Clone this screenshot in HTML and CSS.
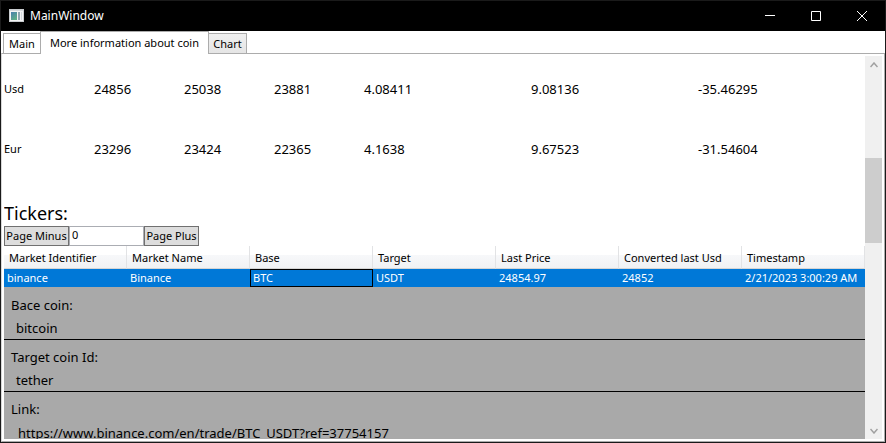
FILE: index.html
```html
<!DOCTYPE html>
<html lang="en">
<head>
<meta charset="utf-8">
<title>MainWindow</title>
<link rel="stylesheet" href="styles.css">
</head>
<body>
<div class="window">
  <header class="titlebar">
    <svg class="app-icon" width="16" height="14" viewBox="0 0 16 14" aria-hidden="true">
      <defs>
        <linearGradient id="pane" x1="0" y1="0" x2="0.6" y2="1">
          <stop offset="0" stop-color="#4a7fae"/><stop offset="1" stop-color="#5fae86"/>
        </linearGradient>
      </defs>
      <rect x="0.5" y="0.5" width="14" height="12" fill="#f4f4f4" stroke="#c9cccf"/>
      <rect x="1" y="1" width="13" height="1" fill="#d5d8db"/>
      <rect x="2" y="3" width="6" height="8" fill="url(#pane)"/>
      <rect x="9" y="3" width="2" height="8" fill="#8fa6b0"/>
      <rect x="12" y="3" width="1" height="8" fill="#d3d9dd"/>
    </svg>
    <h1 class="title">MainWindow</h1>
    <button class="caption" aria-label="Minimize"><svg width="10" height="10" viewBox="0 0 10 10"><path d="M0 4.5h10"/></svg></button>
    <button class="caption" aria-label="Maximize"><svg width="10" height="10" viewBox="0 0 10 10"><path d="M.5.5h9v9h-9z"/></svg></button>
    <button class="caption" aria-label="Close"><svg width="10" height="10" viewBox="0 0 10 10"><path d="M0 0l10 10M10 0L0 10"/></svg></button>
  </header>
  <nav class="tabs" role="tablist">
    <button class="tab tab-plain" role="tab">Main</button>
    <button class="tab tab-active" role="tab" aria-selected="true">More information about coin</button>
    <button class="tab tab-last" role="tab">Chart</button>
  </nav>
  <main class="panel">
    <div class="content">
      <section class="prices">
        <div class="price-row">
          <span class="currency">Usd</span><span>24856</span><span>25038</span><span>23881</span><span>4.08411</span><span>9.08136</span><span>-35.46295</span>
        </div>
        <div class="price-row">
          <span class="currency">Eur</span><span>23296</span><span>23424</span><span>22365</span><span>4.1638</span><span>9.67523</span><span>-31.54604</span>
        </div>
      </section>
      <h2 class="heading">Tickers:</h2>
      <div class="pager">
        <button class="page-button page-minus">Page Minus</button>
        <input class="page-input" type="text" value="0" aria-label="Page">
        <button class="page-button page-plus">Page Plus</button>
      </div>
      <table class="grid">
        <thead>
          <tr><th>Market Identifier</th><th>Market Name</th><th>Base</th><th>Target</th><th>Last Price</th><th>Converted last Usd</th><th>Timestamp</th></tr>
        </thead>
        <tbody>
          <tr class="selected"><td>binance</td><td>Binance</td><td class="current">BTC</td><td>USDT</td><td>24854.97</td><td>24852</td><td>2/21/2023 3:00:29 AM</td></tr>
          <tr>
            <td class="details" colspan="7">
              <dl>
                <div class="detail"><dt>Bace coin:</dt><dd>bitcoin</dd></div>
                <div class="detail"><dt>Target coin Id:</dt><dd>tether</dd></div>
                <div class="detail"><dt>Link:</dt><dd class="link"><a href="https://www.binance.com/en/trade/BTC_USDT?ref=37754157">https://www.binance.com/en/trade/BTC_USDT?ref=37754157</a></dd></div>
              </dl>
            </td>
          </tr>
        </tbody>
      </table>
    </div>
    <div class="scrollbar">
      <button class="arrow" aria-label="Scroll up"><svg width="8" height="6" viewBox="0 0 8 6"><path d="M.5 5L4 1l3.500 4"/></svg></button>
      <div class="track"><div class="before"></div><div class="thumb"></div><div class="after"></div></div>
      <button class="arrow" aria-label="Scroll down"><svg width="8" height="6" viewBox="0 0 8 6"><path d="M.5 1L4 5l3.500-4"/></svg></button>
    </div>
  </main>
</div>
</body>
</html>
```
FILE: styles.css
```css
* { box-sizing: border-box; }

body {
  margin: 0;
  color: #000;
  font: 11px/16px "Noto Sans", "Open Sans", sans-serif;
}

button, input { font: inherit; color: inherit; margin: 0; padding: 0; }

.window {
  display: flex;
  flex-direction: column;
  height: 100vh;
  overflow: hidden;
  border: 1px solid #1a1a1a;
  background: #fff;
}

.titlebar {
  display: flex;
  align-items: center;
  flex: none;
  height: 30px;
  padding-left: 8px;
  background: #000;
  color: #fff;
}
.title { flex: 1; margin: 0 0 0 5px; font-size: 12px; font-weight: 400; }
.caption {
  display: flex;
  align-items: center;
  justify-content: center;
  width: 46px;
  height: 28px;
  border: 0;
  background: none;
}
.caption svg { fill: none; stroke: #fff; }

.tabs { display: flex; align-items: flex-end; flex: none; height: 22px; padding-left: 2px; }
.tab {
  height: 20px;
  padding: 0;
  border: 1px solid #acacac;
  border-bottom: 0;
  background: linear-gradient(#f0f0f0, #e5e5e5);
  white-space: nowrap;
}
.tab-plain { width: 37px; border-right: 0; background: #fff; }
.tab-active {
  position: relative;
  width: 169px;
  height: 23px;
  margin: 0 -1px -1px 0;
  padding-bottom: 1px;
  background: #fff;
}
.tab-last { width: 39px; }

.panel {
  display: flex;
  flex: 1;
  min-height: 0;
  padding: 2px;
  border: 1px solid #acacac;
  border-left-color: #d8d8d8;
}
.content { flex: 1; min-width: 0; overflow: hidden; }

.prices { padding-top: 3px; }
.price-row {
  display: grid;
  grid-template-columns: repeat(4, 90px) repeat(3, 1fr);
  align-items: center;
  height: 60px;
  font-size: 13px;
}
.currency { font-size: 11px; }

.heading { margin: 21px 0 0; font-size: 18px; line-height: 26px; font-weight: 400; }

.pager { display: flex; height: 20px; }
.page-button { border: 1px solid #707070; background: #ddd; white-space: nowrap; }
.page-minus { width: 65px; }
.page-plus { width: 55px; }
.page-input { width: 75px; padding: 0 2px 2px; border: 1px solid #abadb3; border-radius: 0; background: #fff; }

.grid { width: 100%; table-layout: fixed; border-collapse: separate; border-spacing: 0; }
.grid th {
  height: 23px;
  padding: 1px 0 0 5px;
  border-right: 1px solid #e2e3e5;
  border-bottom: 1px solid #d5d5d5;
  background: linear-gradient(#fff 40%, #f7f8fa 40%, #f1f2f4);
  font-weight: 400;
  text-align: left;
  white-space: nowrap;
}
.grid .selected td {
  height: 18px;
  padding: 0 2px;
  border: 1px solid #0078d7;
  background: #0078d7;
  color: #fff;
  line-height: 16px;
  white-space: nowrap;
}
.grid .selected .current { border-color: #000; }

.grid .details { padding: 1px 0 0; background: #a9a9a9; font-size: 13px; }
dl, dt, dd { margin: 0; }
.detail { height: 52px; padding: 6px 7px 0; border-bottom: 1px solid #000; line-height: 23px; }
.detail dd { padding-left: 5px; }
.detail .link { padding: 1px 0 0 7px; }
.link a { color: inherit; text-decoration: none; }

.scrollbar { display: flex; flex-direction: column; flex: none; width: 17px; background: #f0f0f0; }
.arrow { display: flex; align-items: center; justify-content: center; height: 17px; border: 0; background: none; }
.arrow svg { fill: none; stroke: #a0a0a0; stroke-width: 1.5; }
.track { display: flex; flex-direction: column; flex: 1; }
.before { flex: 85; }
.thumb { flex: 85; background: #cdcdcd; }
.after { flex: 179; }
```
